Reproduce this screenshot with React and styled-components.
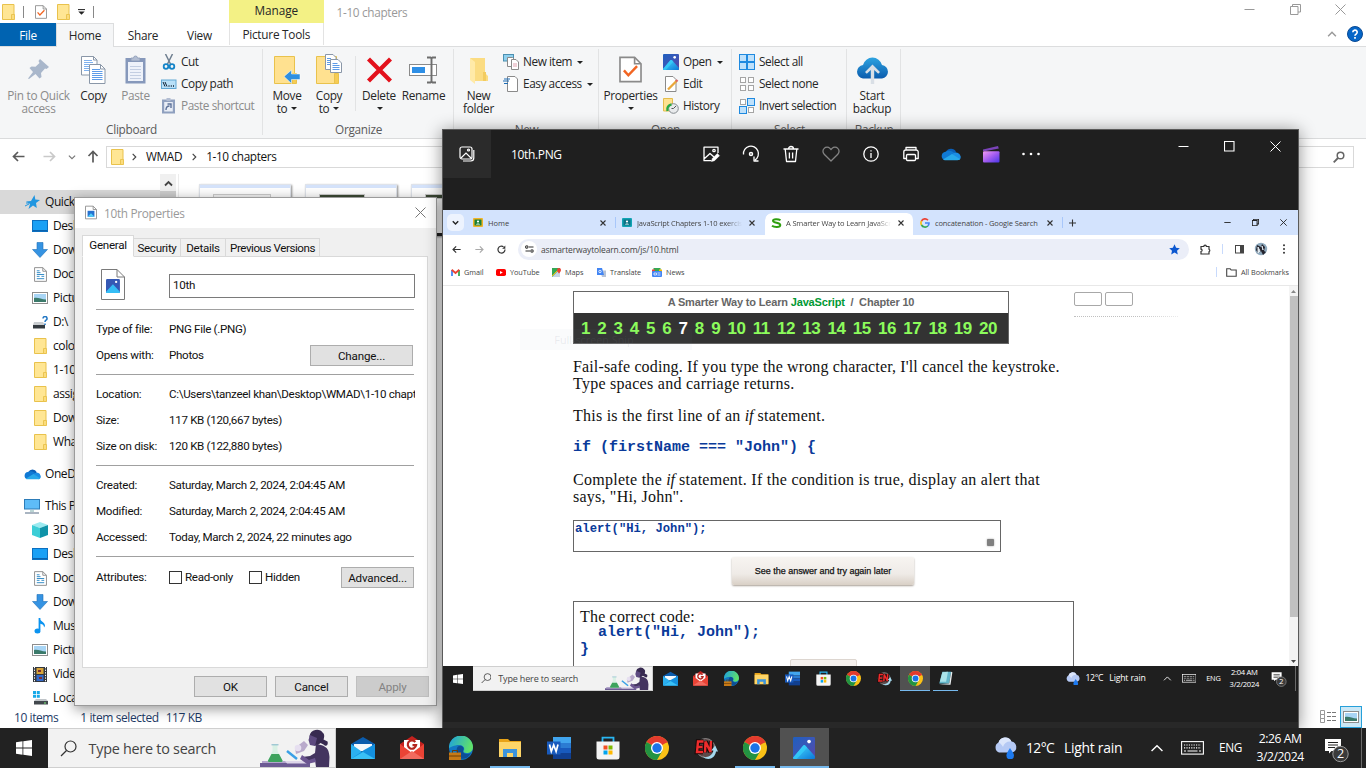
import React from "react";
import styled, { createGlobalStyle, css } from "styled-components";

const Global = createGlobalStyle`
  * { box-sizing: border-box; }
  body { margin: 0; overflow: hidden; background: #fff; }
  svg { display: block; flex: none; }
`;

const UI = `"Open Sans", "Noto Sans", sans-serif`;
const DLG = `Roboto, "Liberation Sans", sans-serif`;
const SERIF = `"Liberation Serif", Georgia, serif`;

const Desktop = styled.div`
  position: relative;
  width: 1366px;
  height: 768px;
  overflow: hidden;
  font-family: ${UI};
`;

/* ---------- shared icons ---------- */

const Folder = ({ w = 13, h = 16 }) => (
  <svg width={w} height={h} viewBox="0 0 13 16">
    <path d="M.5.5h11.500v15H.5z" fill="#ffe694" stroke="#e9c24c" />
    <path d="M9.500 10.500h3v5h-3z" fill="#fbdc7c" stroke="#e9c24c" strokeWidth=".9" />
  </svg>
);

const Page = ({ w = 14, h = 16, children }) => (
  <svg width={w} height={h} viewBox="0 0 14 16">
    <path d="M.6.600H9.500L13.400 4.500V15.400H.6z" fill="#fff" stroke="#8a8a8a" />
    <path d="M9.500.600V4.500H13.400" fill="none" stroke="#8a8a8a" />
    {children}
  </svg>
);

const CheckPage = ({ w, h }) => (
  <Page w={w} h={h}><path d="M3 8.500l2.700 3L11 6" fill="none" stroke="#f26522" strokeWidth="1.500" /></Page>
);

const PhotosLogo = ({ size = 24 }) => (
  <svg width={size} height={size} viewBox="0 0 24 24">
    <defs>
      <linearGradient id="phbg" x1="0" y1="0" x2="1" y2="1">
        <stop offset="0" stopColor="#1f5fbf" /><stop offset=".5" stopColor="#3a57b8" /><stop offset="1" stopColor="#5a45a5" />
      </linearGradient>
      <linearGradient id="phm" x1="0" y1="0" x2="1" y2="1">
        <stop offset="0" stopColor="#4be0ff" /><stop offset="1" stopColor="#0a78d8" />
      </linearGradient>
    </defs>
    <rect width="24" height="24" rx="1.500" fill="url(#phbg)" />
    <path d="M0 22.500L11 9.500a1.800 1.800 0 0 1 2.600 0L24 21v1.500a1.500 1.500 0 0 1-1.500 1.500h-21A1.500 1.500 0 0 1 0 22.500z" fill="url(#phm)" />
    <path d="M0 22.500L11 9.500a1.800 1.800 0 0 1 2.600 0L15.500 11.700 4 24H1.500A1.500 1.500 0 0 1 0 22.500z" fill="#35d0fb" opacity=".7" />
    <circle cx="17.500" cy="5" r="2" fill="#fff" />
  </svg>
);

const Cloud = ({ w = 17, h = 12 }) => (
  <svg width={w} height={h} viewBox="0 0 20 13">
    <path d="M5 4.500A5.500 5.500 0 0 1 15 4.500L12 10z" fill="#0a5fb8" />
    <path d="M4.500 4.200A4.300 4.300 0 0 0 3.500 12.500L14 6.500A7 7 0 0 0 4.500 4.200z" fill="#1079d4" />
    <path d="M12 6.200A4.500 4.500 0 0 1 19.500 8.500C20.300 10.500 19 12.300 17.500 12.600L10 8z" fill="#1b8de4" />
    <path d="M2 12L11 6.600 19 11.500C18.500 12.300 17.800 12.700 16.500 12.700H4.500C3.500 12.700 2.500 12.500 2 12z" fill="#28a8ea" />
  </svg>
);

const WindowGlyph = ({ kind, size = 11, color = "#999", sw = 1 }) => (
  <svg width={size} height={size} viewBox="0 0 11 11" fill="none" stroke={color} strokeWidth={sw}>
    {kind === "min" && <path d="M.5 5.500h10" />}
    {kind === "max" && <path d="M.5.500h9.500v9.500H.5z" strokeWidth={sw} />}
    {kind === "restore" && <path d="M.5 2.500h7.500v8H.5zM2.500 2.500v-2h8v7.500h-2.500" />}
    {kind === "close" && <path d="M.5.5l10 10M10.500.5l-10 10" />}
  </svg>
);

const Chevron = ({ dir = "down", size = 9, color = "#444", sw = 1.300 }) => {
  const d = { down: "M1 3l3.500 3.500L8 3", up: "M1 6.500L4.500 3 8 6.500", right: "M3 1l3.500 3.500L3 8" }[dir];
  return <svg width={size} height={size} viewBox="0 0 9 9"><path d={d} fill="none" stroke={color} strokeWidth={sw} /></svg>;
};

/* ---------- explorer window ---------- */

const Explorer = styled.section`
  position: absolute;
  inset: 0 0 40px 0;
  display: flex;
  flex-direction: column;
  background: #fff;
  color: #262626;
  font-size: 11.800px;
  letter-spacing: -0.42px;
`;

const ExplorerHead = styled.header`
  display: flex;
  height: 47px;
  border-bottom: 1px solid #dcddde;
`;
const HeadLeft = styled.div`width: 229px;`;
const QuickBar = styled.div`
  display: flex;
  align-items: center;
  height: 23px;
  padding-left: 2px;
`;
const QuickIcon = styled.div`margin-right: ${(p) => p.$mr}px;`;
const QuickSep = styled.i`
  width: 1px; height: 12px; background: #888; margin-right: ${(p) => p.$mr || 0}px;
`;
const TabStrip = styled.div`display: flex; letter-spacing: -0.25px;`;
const RibbonTab = styled.div`
  display: flex;
  align-items: center;
  justify-content: center;
  width: ${(p) => p.$w}px;
  height: ${(p) => (p.$on ? 24 : 23)}px;
  ${(p) => p.$file && css`background: #0063b1; color: #fff;`}
  ${(p) => p.$on && css`background: #f5f6f7; border: 1px solid #dcddde; border-bottom: 0; padding-bottom: 2px;`}
`;
const ContextTab = styled.div`
  width: 94.500px;
  text-align: center;
  line-height: 23px;
  letter-spacing: -0.25px;
`;
const ContextTop = styled.div`
  height: 23px; background: #f3f185; line-height: 20px; letter-spacing: -0.05px;
`;
const ContextBottom = styled.div`
  height: 22px; border: solid #e3e3e3; border-width: 0 1px;
`;
const WindowTitle = styled.div`
  padding: 3px 0 0 13px; width: 900px; line-height: 18px; color: #999; letter-spacing: -0.32px;
`;
const HeadRight = styled.div`margin-left: auto; width: 130px;`;
const WinButtons = styled.div`
  display: flex; justify-content: space-between; padding: 4px 20px 0 8px; height: 27px;
`;
const HelpRow = styled.div`
  display: flex; align-items: center; justify-content: flex-end; gap: 10px; padding-right: 3px; height: 14px;
`;

const Ribbon = styled.div`
  display: flex;
  height: 92px;
  background: #f5f6f7;
  border-bottom: 1px solid #dadbdc;
`;
const Group = styled.div`
  display: flex;
  flex-direction: column;
  width: ${(p) => p.$w}px;
  position: relative;
  background: linear-gradient(#e2e3e4, #e2e3e4) right 2px / 1px 86px no-repeat;
`;
const GroupBody = styled.div`
  display: flex; height: 74px; padding-left: ${(p) => p.$pl || 0}px;
`;
const GroupLabel = styled.div`
  text-align: center; line-height: 16px; color: #5a5a5a; letter-spacing: -0.3px;
`;
const BigButton = styled.div`
  width: ${(p) => p.$w}px;
  padding-top: 7px;
  display: flex;
  flex-direction: column;
  align-items: center;
  line-height: 13px;
  white-space: nowrap;
  letter-spacing: -0.3px;
  color: ${(p) => (p.$dim ? "#8b8b8b" : "#262626")};
`;
const BigIcon = styled.div`height: 35px; display: flex; align-items: flex-start;`;
const Line = styled.span`display: flex; align-items: center; gap: 3px; height: 13px;`;
const SmallColumn = styled.div`
  padding: 4px 0 0 ${(p) => p.$pl || 0}px; white-space: nowrap;
`;
const SmallButton = styled.div`
  display: flex; align-items: center; gap: 4px; height: 22px;
  color: ${(p) => (p.$dim ? "#8b8b8b" : "#262626")};
`;
const SmallText = styled.span`line-height: 16px; margin-bottom: 2px;`;
const InnerSep = styled.i`width: 1px; height: 55px; margin: 9px 0 0 8px; background: #e2e3e4;`;
const Caret = styled.i`
  border: solid transparent; border-width: 3px 3px 0; border-top-color: #222; margin-left: 1px;
`;

const PinIcon = () => (
  <svg width="22" height="28" viewBox="0 0 22 28">
    <g transform="translate(0 5)" fill="#a9b7cb">
      <path d="M12 0l9 8-2.500 2-1.500-.5-4 4.500.500 4-2 1.500-4-4.500L1 20l-1-.500 5-6.500L1.500 9l2-1.500 4 .3L11.500 4l-1-2z" />
    </g>
  </svg>
);
const CopyIcon = () => (
  <svg width="25" height="30" viewBox="0 -1 25 30">
    <g fill="#fff" stroke="#8a97a8"><path d="M.5 1.500h12l3.500 3.500v15H.5z" /><path d="M8.500 9.500h11l4.500 4.500v14.500H8.500z" /></g>
    <path d="M3 5.500h8M3 7.500h9M3 9.500h5M3 11.500h5M3 13.500h5M3 15.500h5" stroke="#7fb1ee" />
    <path d="M11 14.500h8M11 16.500h10.500M11 18.500h10.500M11 20.500h10.500M11 22.500h10.500M11 24.500h10.500" stroke="#5c9be8" />
    <path d="M12.500 1.500v3.500h3.500M19.500 9.500V14H24" fill="none" stroke="#8a97a8" />
  </svg>
);
const PasteIcon = () => (
  <svg width="21" height="30" viewBox="0 -1 21 30">
    <rect x=".5" y="3" width="20" height="25.500" fill="#8698bb" />
    <rect x="3" y="7" width="15" height="19" fill="#eef2fa" />
    <path d="M5 11.500h11M5 14.500h11M5 17.500h11M5 20.500h11M5 23.500h11" stroke="#c3cee2" />
    <path d="M6 6V3h2.500a2 2 0 0 1 4 0H15v3z" fill="#b2bdd2" stroke="#8c9ab5" strokeWidth=".8" />
  </svg>
);
const CutIcon = () => (
  <svg width="16" height="16" viewBox="0 0 16 16" fill="none">
    <path d="M4.500 0l5 10M11.500 0l-5 10" stroke="#6f7f90" strokeWidth="1.500" />
    <circle cx="5" cy="12.500" r="2.300" stroke="#1484c8" strokeWidth="1.800" /><circle cx="11" cy="12.500" r="2.300" stroke="#1484c8" strokeWidth="1.800" />
  </svg>
);
const CopyPathIcon = () => (
  <svg width="16" height="16" viewBox="0 0 16 16">
    <rect x=".5" y="4" width="14.500" height="8.500" fill="#b9e0f8" stroke="#63a8d4" />
    <path d="M2 6l2 4.500M4 6l2 4.500" stroke="#123" /><path d="M7.500 10h1M9.800 10h1M12 10h1" stroke="#123" strokeWidth="1.300" />
  </svg>
);
const PasteShortcutIcon = () => (
  <svg width="16" height="16" viewBox="0 0 16 16">
    <rect x="1" y="1.500" width="13" height="14" fill="#8fa0bf" /><rect x="3.200" y="4" width="8.600" height="9.500" fill="#e8edf6" />
    <path d="M5.500 0h4v3h-4z" fill="#b2bdd2" /><path d="M5 12c0-3 1-4 3.500-4M6.500 6h3.500v4" fill="none" stroke="#5c7199" strokeWidth="1.400" />
  </svg>
);
const BigFolder = ({ children, w = 28 }) => (
  <svg width={w} height="31" viewBox={`0 0 ${w} 31`}>
    <path d="M1.500 2.500h20v27h-20z" fill="#ffe190" stroke="#e9c24c" /><path d="M19.500 19.500h4v10h-4z" fill="#f6cc55" stroke="#e9c24c" />
    {children}
  </svg>
);
const MoveIcon = () => <BigFolder><path d="M11 22.500L18.500 16v4H27v5.500h-8.500v4z" fill="#2f8fe0" stroke="#fff" strokeWidth=".5" /></BigFolder>;
const CopyToIcon = () => (
  <BigFolder>
    <path d="M10.500.5h7.500l3 3v12h-10.500z" fill="#fff" stroke="#8a97a8" /><path d="M15.500 5.500h7.500l3.500 3.500v9.500h-11z" fill="#fff" stroke="#8a97a8" />
    <path d="M12 4.500h4M12 6.500h3M12 8.500h3M12 10.500h3M17.500 9.500h5M17.500 11.500h7M17.500 13.500h7M17.500 15.500h7" stroke="#5c9be8" />
  </BigFolder>
);
const DeleteIcon = () => (
  <svg width="26" height="30" viewBox="0 0 26 30"><path d="M2.500 5l22 22M24.500 5l-22 22" stroke="#e3111c" strokeWidth="4.300" /></svg>
);
const RenameIcon = () => (
  <svg width="29" height="30" viewBox="0 0 29 30" fill="none">
    <rect x=".5" y="10.500" width="27" height="11" fill="#fff" stroke="#8a8a8a" /><rect x="3" y="13" width="13" height="6" fill="#2e8fe6" />
    <path d="M22.500 4v24M18 3.500h3.500l1 1 1-1H27M18 28.500h3.500l1-1 1 1H27" stroke="#6d6d6d" strokeWidth="1.900" />
  </svg>
);
const NewFolderIcon = () => (
  <svg width="20" height="31" viewBox="0 0 20 31">
    <path d="M1 4h15v15l3 3v5H6z" fill="#fbdc82" /><path d="M1 4l5 4v22l-5-4z" fill="#ffeaa8" /><path d="M14 18h3v9h-3z" fill="#f3cc60" />
  </svg>
);
const NewItemIcon = () => (
  <svg width="16" height="16" viewBox="0 0 16 16">
    <rect x=".5" y=".500" width="10" height="6.500" fill="#8fd0ee" stroke="#4b8fb0" /><path d="M4.500 3.500h5l2 2v7h-7z" fill="#fff" stroke="#8a8a8a" />
    <path d="M8.500 5.500h4.500l2.500 2.500v7.500h-7z" fill="#fff" stroke="#8a8a8a" /><path d="M10 10h4M10 12h4" stroke="#d27a8c" strokeWidth=".7" />
  </svg>
);
const EasyIcon = () => (
  <svg width="16" height="16" viewBox="0 0 16 16">
    <path d="M4.500.5H12l2.500 2.500v12.500H4.500z" fill="#fff" stroke="#8a8a8a" /><path d="M1 3h6M0 5h6M1 7.500h4" stroke="#1f6db5" strokeWidth="1.200" />
  </svg>
);
const EditIcon = () => (
  <svg width="16" height="16" viewBox="0 0 16 16">
    <path d="M2.500.5H10l3 3v12H2.500z" fill="#fff" stroke="#8a8a8a" /><path d="M5 13.500L13.500 5" stroke="#e9a73b" strokeWidth="2.300" /><path d="M13 5.500l1.500-1.500" stroke="#d66" strokeWidth="2.300" />
  </svg>
);
const HistoryIcon = () => (
  <svg width="16" height="16" viewBox="0 0 16 16">
    <path d="M.5.500h9V13h-9z" fill="#ffe190" stroke="#e4bd4b" /><circle cx="10.500" cy="10.500" r="4.800" fill="#e8eaec" stroke="#858b90" />
    <path d="M10.500 10.500L13 8M10.500 10.500h-2" stroke="#555" /><path d="M8.500 6.500c-3 .500-5 3-4 6.500" fill="none" stroke="#27a844" strokeWidth="2.400" />
  </svg>
);
const SelIcon = ({ on }) => (
  <svg width="16" height="16" viewBox="0 0 16 16">
    {[[0, 0], [8, 0], [0, 8], [8, 8]].map(([x, y], i) => (
      on[i]
        ? <rect key={i} x={x + .5} y={y + .5} width="7" height="7" fill="#bfe1fb" stroke="#1f8ae0" />
        : <rect key={i} x={x + 1.500} y={y + 1.500} width="5" height="5" fill="#fff" stroke="#a5a5a5" />
    ))}
  </svg>
);
const BackupIcon = () => (
  <svg width="33" height="31" viewBox="0 0 33 31">
    <defs><linearGradient id="bk" x1="0" y1="0" x2="0" y2="1"><stop offset="0" stopColor="#2ea3e0" /><stop offset="1" stopColor="#0b5cae" /></linearGradient></defs>
    <path d="M7 24.500A6.800 6.800 0 0 1 7 11 9.800 9.800 0 0 1 26 11 6.800 6.800 0 0 1 26 24.500z" fill="url(#bk)" />
    <path d="M16.500 10.500l7.500 7.500-1.800 1.800-4-3.800V30h-3.400V16l-4 3.800L9 18z" fill="#d9dfe6" />
  </svg>
);

const Big = ({ w, icon, a, b, dim, caret }) => (
  <BigButton $w={w} $dim={dim}>
    <BigIcon>{icon}</BigIcon>
    <Line>{a}</Line>
    <Line>{b}{caret && <Caret />}</Line>
  </BigButton>
);
const Small = ({ icon, children, dim, caret }) => (
  <SmallButton $dim={dim}>{icon}<SmallText>{children}</SmallText>{caret && <Caret />}</SmallButton>
);

const AddressRow = styled.div`
  display: flex; align-items: center; height: 35px; padding-left: 12px;
`;
const NavArrow = styled.div`width: ${(p) => p.$w}px;`;
const AddressBox = styled.div`
  display: flex; align-items: center; gap: 8px; width: 970px; height: 22px; border: 1px solid #d9d9d9; padding-left: 4px; color: #111;
`;
const CrumbIcon = styled.span`margin-right: -2px;`;
const Crumb = styled.span`margin-bottom: 1px; letter-spacing: -0.35px;`;
const SearchBox = styled.div`
  display: flex; align-items: center; justify-content: flex-end; margin-left: 8px; width: 270px; height: 22px; border: 1px solid #d9d9d9; padding-right: 8px;
`;

const ExplorerBody = styled.div`display: flex; flex: 1; min-height: 0; overflow: hidden;`;
const NavPane = styled.nav`width: 160px; padding-top: 16px; color: #111; font-size: 12px;`;
const NavRow = styled.div`
  display: flex; align-items: center; height: 24px; gap: 5px;
  padding-left: ${(p) => (p.$top ? 24 : 32)}px; margin-bottom: ${(p) => p.$mb || 0}px;
  background: ${(p) => (p.$sel ? "#d9d9d9" : "none")};
  white-space: nowrap; overflow: hidden; line-height: 22px;
`;
const NavText = styled.span`margin-bottom: 1px;`;
const NavIcon = styled.span`width: 16px; display: flex; justify-content: center;`;
const NavScroll = styled.div`
  width: 16px; background: linear-gradient(#cdcdcd, #cdcdcd) 0 17px / 16px 400px no-repeat #f0f0f0;
  display: flex; justify-content: center; padding-top: 5px;
`;
const PaneLine = styled.i`width: 1px; margin-left: 2px; background: #ececec;`;
const Thumbs = styled.div`display: flex; gap: 14px; padding: 10px 0 0 20px;`;
const Thumb = styled.div`
  width: 92px; height: 52px; border: 1px solid #dfe3ea; border-bottom: 3px solid #222;
  background: linear-gradient(#d5e3fb, #d5e3fb) 0 0 / 100% 3px no-repeat, #fff;
  box-shadow: 1px 1px 2px rgba(0, 0, 0, .45); padding-top: 9px;
`;
const ThumbBar = styled.div`
  width: ${(p) => (p.$dark ? 46 : 58)}px; height: 5px; margin-left: 13px;
  background: ${(p) => (p.$dark ? "#3c4a35" : "#f4f4f4")}; border: 1px solid #ccc;
`;
const StatusBar = styled.footer`
  display: flex; align-items: center; height: 22px; padding: 0 4px 0 14px; color: #1d3a66; font-size: 12px;
`;
const StatusText = styled.span`margin-right: ${(p) => p.$mr}px;`;
const ViewButtons = styled.div`display: flex; align-items: center; gap: 3px; margin-left: auto;`;
const ViewOn = styled.div`
  display: flex; align-items: center; justify-content: center; width: 22px; height: 22px; border: 1px solid #26a0da; background: #cbe8f6;
`;

const StarIcon = () => (
  <svg width="15" height="14" viewBox="0 0 15 14"><path d="M9.500 0l.8 4.500L15 5l-4 3 .8 5L8 10.500 3.500 14 5 9 1 6.500l5-.5z" fill="#2196e0" /><path d="M0 11l4-2M1 8l3 0" stroke="#2196e0" /></svg>
);
const MonitorIcon = () => (
  <svg width="16" height="12" viewBox="0 0 16 12"><rect x=".5" y=".5" width="15" height="11" fill="#19a0f5" stroke="#0b6fc0" /><path d="M1 10.500h14" stroke="#0a62ad" /></svg>
);
const DownIcon = () => <svg width="16" height="16" viewBox="0 0 16 16"><path d="M5 .5h6v7h4.500L8 15.500.5 7.500H5z" fill="#3593e2" stroke="#1f70b8" strokeWidth=".6" /></svg>;
const DocIcon = () => <Page w={13} h={15}><path d="M3 6h4M3 8h8M3 10h3M8 10h3M3 12.500h8M3 4h3" stroke="#2a86c4" /></Page>;
const PicIcon = () => (
  <svg width="16" height="12" viewBox="0 0 16 12"><rect x=".5" y=".5" width="15" height="11" fill="#fff" stroke="#8d8d8d" /><rect x="2" y="2" width="12" height="8" fill="#a8d5f5" /><path d="M2 6c4-1 7 1.500 12 1.500V10H2z" fill="#3b7a6a" /></svg>
);
const DriveQ = () => (
  <svg width="15" height="13" viewBox="0 0 15 13"><path d="M1 6h9l2 3H0z" fill="#c9cdd0" /><path d="M0 9h12v3.500H0z" fill="#333a3f" /><path d="M10 2.500a2 2 0 1 1 3 1.700c-.8.5-1 .8-1 1.800M12 7.500v1.500" fill="none" stroke="#2377c4" strokeWidth="1.500" /></svg>
);
const PcIcon = () => (
  <svg width="16" height="15" viewBox="0 0 16 15"><rect x=".5" y=".5" width="15" height="9.500" fill="#5ebcf8" stroke="#2d7cb8" /><path d="M6 12h4" stroke="#7aa" /><path d="M1 14h14" stroke="#8696a8" strokeWidth="1.400" /></svg>
);
const CubeIcon = () => (
  <svg width="16" height="16" viewBox="0 0 16 16"><path d="M0 3l8-3 8 3-8 3z" fill="#9beaf0" /><path d="M0 3l8 3v10l-8-3z" fill="#3ccdd6" /><path d="M16 3L8 6v10l8-3z" fill="#0f93a8" /></svg>
);
const MusicIcon = () => (
  <svg width="12" height="16" viewBox="0 0 12 16"><path d="M5.500 0v12" stroke="#0b93f0" strokeWidth="1.800" /><ellipse cx="3.500" cy="13" rx="3" ry="2.500" fill="#0b93f0" /><path d="M5.500.5c1 3 5 3.500 5.500 7-.3 1-.5 1.500-1 2 .2-3-2.500-3.500-4.500-4z" fill="#0b93f0" /></svg>
);
const VideoIcon = () => (
  <svg width="14" height="15" viewBox="0 0 14 15"><rect width="14" height="15" fill="#33383e" /><path d="M1.500 0v15M12.500 0v15" stroke="#fff" strokeDasharray="1.300 1.300" /><path d="M3.500 1h7v6h-7z" fill="#d8a43a" /><path d="M3.500 8h7v6h-7z" fill="#3469c8" /><path d="M5 3h3v2H5zM6 10h3v2H6z" fill="#7b2f2f" /></svg>
);
const DiskIcon = () => (
  <svg width="15" height="14" viewBox="0 0 15 14"><path d="M0 0h3v3H0zM3.800 0h3v3h-3zM0 3.800h3v3H0zM3.800 3.800h3v3h-3z" fill="#17a9e8" /><path d="M3 8h10l2 2H1z" fill="#bfc4c8" /><path d="M1 10h14v3.500H1z" fill="#42484d" /><path d="M11 12h2" stroke="#7df07d" /></svg>
);

const NAV = [
  { t: "Quick access", i: <StarIcon />, top: 1, sel: 1 },
  { t: "Desktop", i: <MonitorIcon /> }, { t: "Downloads", i: <DownIcon /> }, { t: "Documents", i: <DocIcon /> },
  { t: "Pictures", i: <PicIcon /> }, { t: "D:\\", i: <DriveQ /> }, { t: "color", i: <Folder /> },
  { t: "1-10 chapters", i: <Folder /> }, { t: "assignment", i: <Folder /> },
  { t: "Downloads", i: <Folder /> }, { t: "WhatsApp", i: <Folder />, mb: 8 },
  { t: "OneDrive", i: <Cloud />, top: 1, mb: 8 }, { t: "This PC", i: <PcIcon />, top: 1 },
  { t: "3D Objects", i: <CubeIcon /> }, { t: "Desktop", i: <MonitorIcon /> }, { t: "Documents", i: <DocIcon /> },
  { t: "Downloads", i: <DownIcon /> }, { t: "Music", i: <MusicIcon /> }, { t: "Pictures", i: <PicIcon /> },
  { t: "Videos", i: <VideoIcon /> }, { t: "Local Disk", i: <DiskIcon /> },
];

const BackArrow = ({ flip, color = "#5a5a5a", size = 13, sw = 1.700 }) => (
  <svg width={size} height={size} viewBox="0 0 13 13"><g transform={flip ? "translate(13 0) scale(-1 1)" : undefined}><path d="M12.500 6.500H1.500M6 2L1.500 6.500 6 11" fill="none" stroke={color} strokeWidth={sw} /></g></svg>
);

const ExplorerWindow = () => (
  <Explorer>
    <ExplorerHead>
      <HeadLeft>
        <QuickBar>
          <QuickIcon $mr={8}><Folder /></QuickIcon><QuickSep $mr={11} />
          <QuickIcon $mr={10}><CheckPage w={12} h={16} /></QuickIcon>
          <QuickIcon $mr={8}><Folder /></QuickIcon>
          <QuickIcon $mr={8}><svg width="7" height="6" viewBox="0 0 7 6"><path d="M0 .6h7" stroke="#222" /><path d="M.3 2.500h6.400L3.500 5.800z" fill="#222" /></svg></QuickIcon>
          <QuickSep />
        </QuickBar>
        <TabStrip>
          <RibbonTab $w={56} $file>File</RibbonTab><RibbonTab $w={58} $on>Home</RibbonTab>
          <RibbonTab $w={58}>Share</RibbonTab><RibbonTab $w={55}>View</RibbonTab>
        </TabStrip>
      </HeadLeft>
      <ContextTab><ContextTop>Manage</ContextTop><ContextBottom>Picture Tools</ContextBottom></ContextTab>
      <WindowTitle>1-10 chapters</WindowTitle>
      <HeadRight>
        <WinButtons><WindowGlyph kind="min" /><WindowGlyph kind="restore" /><WindowGlyph kind="close" /></WinButtons>
        <HelpRow>
          <Chevron dir="up" color="#999" size={10} />
          <svg width="16" height="16" viewBox="0 0 16 16"><circle cx="8" cy="8" r="7.500" fill="#0566c8" stroke="#0a4a94" /><path d="M5.800 6.200a2.200 2.200 0 1 1 3.200 2c-.8.4-1 .8-1 1.500M8 11v1.700" fill="none" stroke="#fff" strokeWidth="1.700" /></svg>
        </HelpRow>
      </HeadRight>
    </ExplorerHead>
    <Ribbon>
      <Group $w={263}>
        <GroupBody>
          <Big w={77} icon={<PinIcon />} a="Pin to Quick" b="access" dim />
          <Big w={33} icon={<CopyIcon />} a="Copy" /><Big w={51} icon={<PasteIcon />} a="Paste" dim />
          <SmallColumn>
            <Small icon={<CutIcon />}>Cut</Small><Small icon={<CopyPathIcon />}>Copy path</Small><Small icon={<PasteShortcutIcon />} dim>Paste shortcut</Small>
          </SmallColumn>
        </GroupBody>
        <GroupLabel>Clipboard</GroupLabel>
      </Group>
      <Group $w={191}>
        <GroupBody>
          <Big w={48} icon={<MoveIcon />} a="Move" b="to" caret /><Big w={36} icon={<CopyToIcon />} a="Copy" b="to" caret />
          <InnerSep />
          <Big w={46} icon={<DeleteIcon />} a="Delete" caret /><Big w={43} icon={<RenameIcon />} a="Rename" />
        </GroupBody>
        <GroupLabel>Organize</GroupLabel>
      </Group>
      <Group $w={145}>
        <GroupBody>
          <Big w={49} icon={<NewFolderIcon />} a="New" b="folder" />
          <SmallColumn><Small icon={<NewItemIcon />} caret>New item</Small><Small icon={<EasyIcon />} caret>Easy access</Small></SmallColumn>
        </GroupBody>
        <GroupLabel>New</GroupLabel>
      </Group>
      <Group $w={133}>
        <GroupBody>
          <Big w={63} icon={<CheckPage w={23} h={31} />} a="Properties" caret />
          <SmallColumn $pl={1}><Small icon={<PhotosLogo size={16} />} caret>Open</Small><Small icon={<EditIcon />}>Edit</Small><Small icon={<HistoryIcon />}>History</Small></SmallColumn>
        </GroupBody>
        <GroupLabel>Open</GroupLabel>
      </Group>
      <Group $w={115}>
        <GroupBody $pl={7}>
          <SmallColumn><Small icon={<SelIcon on={[1, 1, 1, 1]} />}>Select all</Small><Small icon={<SelIcon on={[0, 0, 0, 0]} />}>Select none</Small><Small icon={<SelIcon on={[0, 1, 1, 0]} />}>Invert selection</Small></SmallColumn>
        </GroupBody>
        <GroupLabel>Select</GroupLabel>
      </Group>
      <Group $w={54}>
        <GroupBody><Big w={50} icon={<BackupIcon />} a="Start" b="backup" /></GroupBody>
        <GroupLabel>Backup</GroupLabel>
      </Group>
    </Ribbon>
    <AddressRow>
      <NavArrow $w={31}><BackArrow /></NavArrow><NavArrow $w={25}><BackArrow flip color="#c9c9c9" /></NavArrow>
      <NavArrow $w={19}><Chevron size={8} color="#777" /></NavArrow>
      <NavArrow $w={19}><svg width="12" height="13" viewBox="0 0 12 13"><path d="M6 12.500V1.500M1.500 6L6 1.500 10.500 6" fill="none" stroke="#5a5a5a" strokeWidth="1.700" /></svg></NavArrow>
      <AddressBox><CrumbIcon><Folder /></CrumbIcon><Chevron dir="right" size={8} /><Crumb>WMAD</Crumb><Chevron dir="right" size={8} /><Crumb>1-10 chapters</Crumb></AddressBox>
      <SearchBox><svg width="12" height="12" viewBox="0 0 12 12"><circle cx="7.500" cy="4.500" r="3.300" fill="none" stroke="#666" strokeWidth="1.500" /><path d="M5 7L.7 11.300" stroke="#666" strokeWidth="1.800" /></svg></SearchBox>
    </AddressRow>
    <ExplorerBody>
      <NavPane>
        {NAV.map((n, k) => <NavRow key={k} $top={n.top} $sel={n.sel} $mb={n.mb}><NavIcon>{n.i}</NavIcon><NavText>{n.t}</NavText></NavRow>)}
      </NavPane>
      <NavScroll><Chevron dir="up" sw={1.800} size={9} /></NavScroll>
      <PaneLine />
      <Thumbs><Thumb><ThumbBar /></Thumb><Thumb><ThumbBar $dark /></Thumb><Thumb><ThumbBar $dark /></Thumb></Thumbs>
    </ExplorerBody>
    <StatusBar>
      <StatusText $mr={22}>10 items</StatusText><StatusText $mr={7}>1 item selected</StatusText><StatusText $mr={0}>117 KB</StatusText>
      <ViewButtons>
        <svg width="17" height="14" viewBox="0 0 17 14"><path d="M.5.500h4v4h-4zM.5 4.500h4v4h-4zM.5 8.500h4v4h-4z" fill="none" stroke="#999" /><path d="M7 2.500h4M12 2.500h4M7 6.500h4M12 6.500h4M7 10.500h4M12 10.500h4" stroke="#777" /></svg>
        <ViewOn><PicIcon /></ViewOn>
      </ViewButtons>
    </StatusBar>
  </Explorer>
);

/* ---------- properties dialog ---------- */

const Dialog = styled.section`
  position: absolute;
  left: 74px;
  top: 197px;
  width: 363px;
  height: 509px;
  border: 1px solid #9b9b9b;
  background: #f0f0f0;
  box-shadow: 0 3px 12px rgba(0, 0, 0, .42);
  font-family: ${DLG};
  font-size: 11.600px;
  letter-spacing: -0.3px;
  color: #111;
`;
const DialogTitle = styled.div`
  display: flex; align-items: center; height: 30px; padding: 0 10px 1px; background: #fff; color: #999;
  font-family: ${UI}; font-size: 11.800px; gap: 7px;
`;
const Spacer = styled.i`flex: 1;`;
const DialogTabs = styled.div`display: flex; align-items: flex-end; height: 29px; padding: 0 7px; margin-bottom: -1px;`;
const DialogTab = styled.div`
  width: ${(p) => p.$w}px; height: ${(p) => (p.$on ? 22 : 19)}px; line-height: ${(p) => (p.$on ? 18 : 18)}px;
  text-align: center; white-space: nowrap; border: 1px solid #d9d9d9; border-left-width: ${(p) => (p.$on ? 1 : 0)}px;
  ${(p) => p.$on && css`background: #fff; border-bottom-color: #fff; position: relative;`}
`;
const TightTab = styled(DialogTab)`letter-spacing: -0.45px;`;
const DialogPane = styled.div`
  margin: 0 8px 0 7px; height: 412px; padding: 12px 12px 0 13px; border: 1px solid #d9d9d9; background: #fff;
`;
const IconRow = styled.div`display: flex; height: 40px; padding-left: 5px;`;
const NameInput = styled.div`
  width: 246px; height: 24px; margin: 5px 0 0 44px; border: 1px solid #7a7a7a; padding-left: 3px; line-height: 20px;
`;
const Rule = styled.div`height: 1px; width: 318px; background: #a0a0a0;`;
const Field = styled.div`
  display: flex; align-items: center; height: 26px; width: ${(p) => p.$w || 319}px;
`;
const FieldBlock = styled.div`padding: ${(p) => p.$p};`;
const FieldName = styled.span`width: 73px; letter-spacing: -0.26px;`;
const FieldValue = styled.span`width: 246px; overflow: hidden; white-space: nowrap; letter-spacing: -0.32px;`;
const Button = styled.div`
  width: ${(p) => p.$w || 73}px; height: 21px; line-height: 20px; text-align: center; letter-spacing: -0.15px;
  border: 1px solid ${(p) => (p.$off ? "#bfbfbf" : "#adadad")}; background: ${(p) => (p.$off ? "#ccc" : "#e1e1e1")};
  color: ${(p) => (p.$off ? "#838383" : "#111")};
`;
const Check = styled.i`width: 13px; height: 13px; border: 1px solid #333; background: #fff; margin-right: 3px;`;
const CheckLabel = styled.span`width: ${(p) => p.$w}px;`;
const DialogButtons = styled.div`display: flex; justify-content: flex-end; gap: 8px; padding: 8px 7px 0;`;

const PropertiesDialog = () => (
  <Dialog>
    <DialogTitle>
      <Page w={12} h={15}><path d="M3 6h8v7H3z" fill="#2672d0" /><path d="M3 13l4-4 4 4z" fill="#4fd0f8" /></Page>
      <span>10th Properties</span><Spacer />
      <WindowGlyph kind="close" color="#777" />
    </DialogTitle>
    <DialogTabs>
      <DialogTab $w={52} $on>General</DialogTab><DialogTab $w={47}>Security</DialogTab>
      <DialogTab $w={45}>Details</DialogTab><TightTab $w={94}>Previous Versions</TightTab>
    </DialogTabs>
    <DialogPane>
      <IconRow>
        <svg width="24" height="31" viewBox="0 0 24 31"><path d="M.5.5H16L23.500 8V30.500H.5z" fill="#fff" stroke="#7a7a7a" /><path d="M16 .5V8h7.500" fill="none" stroke="#7a7a7a" /><g transform="translate(5 10) scale(.58)"><rect width="24" height="24" rx="2" fill="#3558b4" /><path d="M0 22L12 9 24 22v2H0z" fill="#35bdf5" /><circle cx="17.500" cy="5" r="2" fill="#fff" /></g></svg>
        <NameInput>10th</NameInput>
      </IconRow>
      <Rule />
      <FieldBlock $p="6px 0 6px">
        <Field><FieldName>Type of file:</FieldName><FieldValue>PNG File (.PNG)</FieldValue></Field>
        <Field $w={317}><FieldName>Opens with:</FieldName><span>Photos</span><Spacer /><Button $w={103}>Change...</Button></Field>
      </FieldBlock>
      <Rule />
      <FieldBlock $p="6px 0 6px">
        <Field><FieldName>Location:</FieldName><FieldValue>C:\Users\tanzeel khan\Desktop\WMAD\1-10 chapters</FieldValue></Field>
        <Field><FieldName>Size:</FieldName><FieldValue>117 KB (120,667 bytes)</FieldValue></Field>
        <Field><FieldName>Size on disk:</FieldName><FieldValue>120 KB (122,880 bytes)</FieldValue></Field>
      </FieldBlock>
      <Rule />
      <FieldBlock $p="6px 0 6px">
        <Field><FieldName>Created:</FieldName><FieldValue>Saturday, March 2, 2024, 2:04:45 AM</FieldValue></Field>
        <Field><FieldName>Modified:</FieldName><FieldValue>Saturday, March 2, 2024, 2:04:45 AM</FieldValue></Field>
        <Field><FieldName>Accessed:</FieldName><FieldValue>Today, March 2, 2024, 22 minutes ago</FieldValue></Field>
      </FieldBlock>
      <Rule />
      <FieldBlock $p="7px 0">
        <Field><FieldName>Attributes:</FieldName><Check /><CheckLabel $w={64}>Read-only</CheckLabel><Check /><CheckLabel $w={76}>Hidden</CheckLabel><Button>Advanced...</Button></Field>
      </FieldBlock>
    </DialogPane>
    <DialogButtons><Button>OK</Button><Button>Cancel</Button><Button $off>Apply</Button></DialogButtons>
  </Dialog>
);

/* ---------- taskbar (sized in em) ---------- */

const Bar = styled.div`
  display: flex;
  align-items: stretch;
  height: 2.500em;
  font-size: ${(p) => p.$fs}px;
  background: #1f1f1f;
  color: #fff;
  flex: none;
`;
const BottomBar = styled(Bar)`position: absolute; left: 0; right: 0; bottom: 0; background: #222;`;
const StartCell = styled.div`width: 3em; display: flex; align-items: center; justify-content: center;`;
const SearchCell = styled.div`
  width: 18em; margin-right: .18em; background: #f2f2f2; border: 1px solid #cfcfcf; border-left: 0; color: #444;
  display: flex; align-items: center; justify-content: space-between; padding-left: .75em; overflow: hidden;
`;
const SearchText = styled.span`font-size: .9em; margin-left: .8em; flex: 1; white-space: nowrap; letter-spacing: -0.018em;`;
const AppCell = styled.div`
  width: 3.063em; display: flex; align-items: center; justify-content: center;
  ${(p) => p.$on && css`background: linear-gradient(#76b9ed, #76b9ed) bottom / 100% .15em no-repeat #515151;`}
  ${(p) => p.$line && css`background: linear-gradient(#76b9ed, #76b9ed) bottom / 2.500em .15em no-repeat;`}
`;
const TrayCell = styled.div`
  width: ${(p) => p.$w}em; display: flex; align-items: center; justify-content: center; white-space: nowrap;
`;
const NoticeCell = styled(TrayCell)`padding-top: .2em;`;
const Weather = styled(TrayCell)`justify-content: flex-start; margin-left: auto;`;
const TrayText = styled.span`
  font-size: ${(p) => p.$s}em; margin-left: ${(p) => p.$ml || 0}em; letter-spacing: ${(p) => p.$ls || 0}em; line-height: 1.500; text-align: center;
`;
const EndLine = styled.i`width: .31em; border-left: 1px solid #6a6a6a;`;

const Icon = ({ s, w = 24, h = 24, children }) => <svg width={w * s} height={h * s} viewBox={`0 0 ${w} ${h}`}>{children}</svg>;
const WinLogo = ({ s }) => <Icon s={s} w={16} h={16}><path d="M0 2.200l6.500-.9v6.300H0zM7.300 1.200L16 0v7.600H7.300zM0 8.400h6.500v6.300L0 13.800zM7.300 8.400H16V16l-8.700-1.200z" fill="#fff" /></Icon>;
const MailIcon = ({ s }) => <Icon s={s}><path d="M0 8L12 1l12 7v3H0z" fill="#0b5cad" /><path d="M3 8h18v7H3z" fill="#f4f8fc" /><path d="M0 8l12 8.500L24 8v15H0z" fill="#2bb0f0" /><path d="M0 23l13-9 11-6v15z" fill="#1490df" /><path d="M0 23l12-7 12 7z" fill="#39c1f7" /></Icon>;
const GmailIcon = ({ s }) => <Icon s={s}><path d="M0 8L12 0l12 8v15H0z" fill="#c5221f" /><path d="M4 4h16v12H4z" fill="#fff" /><path d="M15.300 6a4.200 4.200 0 1 0 .8 3.200H12.500" fill="none" stroke="#b3261e" strokeWidth="2.200" /><path d="M0 8l12 9 12-9v15H0z" fill="#ea4335" /><path d="M0 23l12-8 12 8z" fill="#f26a5e" /></Icon>;
const EdgeIcon = ({ s }) => <Icon s={s}><defs><linearGradient id="edg" x1="0" x2="1" y2=".3"><stop offset="0" stopColor="#1b9ee2" /><stop offset="1" stopColor="#5fe06b" /></linearGradient></defs><circle cx="12" cy="12" r="12" fill="#1277c4" /><path d="M0 12A12 12 0 0 1 24 11c0 4-3 6-6.500 6-3 0-3.500-1.500-2.500-3 1-2-1-5-5-5C5 9 1.500 11.500 0 12z" fill="url(#edg)" /><path d="M8 12c1-2.500 4-3 6-1 1.500 2 0 3 0 4.500 0 2 4 3.500 8 1.500-3 6-9 7-12 4.500-3-2-3-6-2-9.500z" fill="#0d4f96" /><path d="M0 16.500h12V24H0z" fill="#c77a16" /><path d="M3.500 16.500V14.500h5v2M0 20h12" stroke="#6b3c06" fill="none" /></Icon>;
const FilesIcon = ({ s }) => <Icon s={s}><path d="M1 3h9l2 2h11v16H1z" fill="#e8a317" /><path d="M1 6h22v15H1z" fill="#fdd568" /><path d="M5 21v-8h14v8h-4v-4H9v4z" fill="#3d94dc" /></Icon>;
const WordIcon = ({ s }) => <Icon s={s}><path d="M6 1h18v6H6z" fill="#41a5ee" /><path d="M6 7h18v5H6z" fill="#2b7cd3" /><path d="M6 12h18v5H6z" fill="#185abd" /><path d="M6 17h18v6H6z" fill="#103f91" /><path d="M0 5.500h13.500v13H0z" fill="#185abd" /><path d="M2.500 8.500l1.800 7 2.400-6.500 2.400 6.500 1.900-7" fill="none" stroke="#fff" strokeWidth="1.700" /></Icon>;
const StoreIcon = ({ s }) => <Icon s={s}><path d="M6.500 7V1.700h11V7" fill="none" stroke="#29b6f2" strokeWidth="1.800" /><path d="M.5 5.500h23V21a2.500 2.500 0 0 1-2.500 2.500H3A2.500 2.500 0 0 1 .5 21z" fill="#f4f4f4" /><path d="M7.500 9.500h4v4h-4z" fill="#f25022" /><path d="M12.500 9.500h4v4h-4z" fill="#7fba00" /><path d="M7.500 14.500h4v4h-4z" fill="#00a4ef" /><path d="M12.500 14.500h4v4h-4z" fill="#ffb900" /></Icon>;
const ChromeIcon = ({ s }) => <Icon s={s}><circle cx="12" cy="12" r="12" fill="#fbc116" /><path d="M12 12L1.600 6A12 12 0 0 1 22.400 6z" fill="#e33b2e" /><path d="M1.600 6A12 12 0 0 0 12 24l5.200-9L12 12z" fill="#229342" /><path d="M12 6h10.400" stroke="#e33b2e" strokeWidth="1" /><circle cx="12" cy="12" r="6" fill="#fff" /><circle cx="12" cy="12" r="4.700" fill="#1a73e8" /></Icon>;
const EndNoteIcon = ({ s }) => <Icon s={s}><circle cx="11.500" cy="12" r="9.500" fill="#5c4a4a" stroke="#b9b9b9" strokeWidth=".6" /><path d="M9.500 5.500H4L3 16h6M3.500 11h5M11 16.500l.5-11 5 10.500.5-11" fill="none" stroke="#180a0a" strokeWidth="4.500" /><path d="M9.500 5.500H4L3 16h6M3.500 11h5M11 16.500l.5-11 5 10.500.5-11" fill="none" stroke="#ee2c2c" strokeWidth="2.400" /><path d="M8.500 20.500c5 2 10-1 11-6h-2.300l4-5 2.800 6h-2c-1 7-8 10-13.500 5z" fill="#a5d9ee" /></Icon>;
const NoteIcon = ({ s }) => <Icon s={s}><path d="M7 1h14l-3 19H2z" fill="#62b5c9" /><path d="M7 2l9-1-3 16H3z" fill="#a9e2e8" /><path d="M21 1l2 1-3 20-18-1 16-1z" fill="#e9eef0" /></Icon>;
const WeatherIcon = ({ s }) => <Icon s={s} w={25} h={22}><path d="M6 15.500A5.500 5.500 0 0 1 5.500 5.500 7 7 0 0 1 18.500 4.500 5.700 5.700 0 0 1 19.500 15.500z" fill="#b5c9f4" /><path d="M5.500 5.500A7 7 0 0 1 18.500 4.500C14 4 11 6 10 10 8 6.500 7 6 5.500 5.500z" fill="#dce6fb" /><path d="M17 11c2.500 4 4 5.500 4 7.500a3.800 3.800 0 0 1-7.600 0c0-2 1.600-4 3.600-7.500z" fill="#1d7af0" /></Icon>;
const KeyboardIcon = ({ s }) => <Icon s={s} w={23} h={14}><rect x=".6" y=".6" width="21.800" height="12.500" fill="none" stroke="#fff" strokeWidth="1.100" /><path d="M3 4h17M3 6.800h17" stroke="#fff" strokeWidth="1.200" strokeDasharray="1.200 1.200" /><path d="M3 10h2M6.500 10h10M18 10h2" stroke="#fff" strokeWidth="1.200" /></Icon>;
const NoticeIcon = ({ s }) => <Icon s={s} w={26} h={26}><path d="M1 2h16v12H7.500L5 16.500V14H1z" fill="#fff" /><path d="M4 5.500h10M4 8h10M4 10.500h7" stroke="#222" /><circle cx="16.500" cy="17" r="7.700" fill="#3a3a3a" stroke="#999" /><text x="16.500" y="21.400" textAnchor="middle" fontSize="12.500" fontFamily="Open Sans" fill="#fff">2</text></Icon>;
const SearchArt = ({ s }) => (
  <Icon s={s} w={75} h={38}>
    <path d="M0 34h50v4H0z" fill="#6d5b94" /><path d="M2 32h46v2H2z" fill="#b3a5cc" />
    <path d="M12.500 16h5v6l5 9.500a1 1 0 0 1-1 1.500H9a1 1 0 0 1-1-1.500l4.500-9.500z" fill="#d8f0e4" /><path d="M11.500 25h7.500l3.500 6.500a1 1 0 0 1-1 1.500H9a1 1 0 0 1-1-1.500z" fill="#3da35d" /><path d="M11.500 15.800h7" stroke="#7fb7c8" />
    <path d="M27 22l10 8" stroke="#3aa0e6" strokeWidth="2.500" /><path d="M25 32h24l-2 2.500H27z" fill="#ded6ea" />
    <path d="M35 19l9-7 4 4-4 6-8 3z" fill="#b9aacb" /><circle cx="38" cy="19" r="3.300" fill="#e6dff0" />
    <path d="M49.500 7a7.500 7.500 0 0 1 13.500-3c2 1.500 1 5 .5 6.500l4 2c1 3-1 6-4 3l-3-1.500-4 3-3-1-3-2z" fill="#372a50" /><path d="M50 6l-1.500 5 1.500 5 5 1 2-8z" fill="#5d4a80" />
    <path d="M56 15l5 1c7 2 8 6 8.500 12L69 38H56l-1-7-10 1-3-4 8-1 5-3z" fill="#43345f" /><path d="M42 26l7 5 6-2 1 4-9 2-7-5z" fill="#6b5590" />
  </Icon>
);

const APPS = { mail: MailIcon, gmail: GmailIcon, edge: EdgeIcon, files: FilesIcon, word: WordIcon, store: StoreIcon, chrome: ChromeIcon, en: EndNoteIcon, note: NoteIcon };

const TaskbarContent = ({ s, apps, time }) => (
  <>
    <StartCell><WinLogo s={s} /></StartCell>
    <SearchCell>
      <Icon s={s} w={17} h={17}><circle cx="10.500" cy="6.500" r="5.500" fill="none" stroke="#333" strokeWidth="1.200" /><path d="M6.500 10.500L1 16" stroke="#333" strokeWidth="1.300" /></Icon>
      <SearchText>Type here to search</SearchText>
      <SearchArt s={s} />
    </SearchCell>
    {apps.map(([name, state], i) => {
      const A = APPS[name];
      return <AppCell key={i} $on={state === "on"} $line={state === "line"}>{A ? <A s={s} /> : <PhotosLogo size={22 * s} />}</AppCell>;
    })}
    <Weather $w={9.400}><WeatherIcon s={s} /><TrayText $s={.87} $ml={.6} $ls={-.04}>12°C</TrayText><TrayText $s={.87} $ml={.7} $ls={-.02}>Light rain</TrayText></Weather>
    <TrayCell $w={1.750}><Chevron dir="up" size={14 * s} color="#fff" sw={.9} /></TrayCell>
    <TrayCell $w={2.630}><KeyboardIcon s={s} /></TrayCell>
    <TrayCell $w={2.190}><TrayText $s={.74} $ls={-.03}>ENG</TrayText></TrayCell>
    <TrayCell $w={4}><TrayText $s={.76} $ls={-.035}>{time}<br />3/2/2024</TrayText></TrayCell>
    <NoticeCell $w={3.060}><NoticeIcon s={s} /></NoticeCell>
    <EndLine />
  </>
);

/* ---------- photos window ---------- */

const Photos = styled.section`
  position: absolute;
  left: 442px;
  top: 129px;
  width: 857px;
  height: 599px;
  display: flex;
  flex-direction: column;
  border: 1px solid #5a5a5a;
  border-bottom: 0;
  background: #1f1f1f;
  color: #fff;
  box-shadow: 0 2px 16px rgba(0, 0, 0, .45);
`;
const PhotosBar = styled.div`display: flex; height: 80px; align-items: flex-start;`;
const PhotosHome = styled.div`
  width: 48px; height: 48px; background: #2b2b2b; display: flex; align-items: center; justify-content: center;
`;
const PhotosName = styled.div`width: 200px; padding-left: 20px; line-height: 49px; font-size: 12px; letter-spacing: -0.35px;`;
const Tool = styled.div`width: 40px; height: 48px; display: flex; align-items: center; justify-content: center;`;
const WinCell = styled.div`width: 46px; height: 32px; display: flex; align-items: center; justify-content: center;`;
const PhotosFoot = styled.div`flex: 1; border-bottom: 6px solid #282828;`;

const Stroke = ({ children, c = "#fff", o = 1 }) => (
  <svg width="20" height="20" viewBox="0 0 20 20" fill="none" stroke={c} strokeWidth="1.300" opacity={o} strokeLinejoin="round">{children}</svg>
);

/* ---------- browser shown in the photo ---------- */

const Browser = styled.div`
  display: flex; flex-direction: column; height: 456px; background: #fff; color: #444; font-size: 7.500px; letter-spacing: 0;
`;
const TabBar = styled.div`display: flex; align-items: center; height: 25px; background: #d3e3fd; padding-left: 4px;`;
const TabSearch = styled.div`
  width: 17px; height: 17px; border-radius: 5px; background: #edf3fe; margin-right: 3px; display: flex; align-items: center; justify-content: center;
`;
const Tab = styled.div`
  display: flex; align-items: center; width: 149px; height: 22px; margin-top: 3px; padding: 0 0 3px 6px; border-radius: 7px 7px 0 0;
  background: ${(p) => (p.$on ? "#fff" : "none")};
  border-right: 1px solid ${(p) => (p.$sep ? "#a8c7fa" : "transparent")};
  background-clip: padding-box;
  ${(p) => p.$sep && css`border-radius: 0; height: 11px; margin-top: 0; padding-bottom: 0;`}
`;
const Fav = styled.span`width: 15px; display: flex;`;
const TabTitle = styled.span`
  width: 105px; margin-right: 7px; overflow: hidden; white-space: nowrap; letter-spacing: ${(p) => p.$ls || 0}px;
  ${(p) => p.$fade && css`mask-image: linear-gradient(90deg, #000 85%, transparent);`}
`;
const BrowserWin = styled.div`display: flex; margin-left: auto; gap: 21px; padding-right: 11px;`;
const NavBar = styled.div`display: flex; align-items: center; height: 28px; padding-left: 9px;`;
const NavItem = styled.div`width: ${(p) => p.$w}px; display: flex;`;
const Omni = styled.div`
  display: flex; align-items: center; width: 671px; height: 21px; border-radius: 11px; background: #ebeef8; padding: 0 9px 0 3px; color: #444; font-size: 8.500px; letter-spacing: -0.14px; margin-right: 11px;
`;
const SiteInfo = styled.div`width: 16px; height: 16px; border-radius: 50%; background: #fff; margin-right: 4px; display: flex; align-items: center; justify-content: center;`;
const Bookmarks = styled.div`display: flex; align-items: center; height: 23px; padding: 0 9px 4px 8px; border-bottom: 1px solid #e8e8e8; font-size: 7.300px;`;
const Mark = styled.div`display: flex; align-items: center; gap: 4px; width: ${(p) => p.$w}px; letter-spacing: -0.05px;`;
const MarkSep = styled.i`width: 1px; height: 10px; background: #c8dafc; margin: 0 ${(p) => p.$m}px;`;
const PageArea = styled.div`display: flex; flex: 1; min-height: 0; overflow: hidden; position: relative;`;
const Article = styled.main`
  width: 501px; margin-left: 130px; padding-top: 5px; color: #111; font-family: ${SERIF}; font-size: 16px; letter-spacing: .24px; line-height: 17px;
  em { letter-spacing: -0.2px; }
`;
const Masthead = styled.div`width: 436px; height: 53px; border: 1px solid #666; background: #333; font-family: "Liberation Sans", sans-serif; margin-bottom: 14px;`;
const MastTitle = styled.div`
  height: 21px; background: #fff; text-align: center; line-height: 20px; font-size: 11px; font-weight: 700; color: #666; letter-spacing: -0.17px; white-space: pre;
  b { color: #009933; }
`;
const Numbers = styled.div`display: flex; gap: 7.260px; padding-left: 7px; font-size: 17px; font-weight: 700; letter-spacing: -0.45px; line-height: 31px; color: #8cfc5c;`;
const Num = styled.span`color: ${(p) => (p.$here ? "#fff" : "inherit")};`;
const Para = styled.p`margin: 0 0 15px; width: 500px; white-space: nowrap;`;
const Row = styled.span`display: block; letter-spacing: ${(p) => p.$ls}px;`;
const Code = styled.code`
  font: 700 ${(p) => p.$s || 15}px/17px "Liberation Mono", monospace; letter-spacing: 0; color: #0a3a9a; white-space: pre; display: block;
`;
const Answer = styled.div`
  display: flex; align-items: flex-end; justify-content: space-between; width: 428px; height: 32px; border: 1px solid #666; padding: 0 0 0 1px; margin: 14px 0 5px;
`;
const AnswerCode = styled(Code)`align-self: flex-start; line-height: 16px;`;
const StatusDot = styled.i`width: 7px; height: 7px; border-radius: 1px; background: #808080; margin: 0 6px 5px 0; box-shadow: 0 0 2px #999;`;
const TryButton = styled.div`
  width: 182px; height: 28px; margin: 0 0 16px 159px; text-align: center; font: 9px/28px "Liberation Sans", sans-serif; letter-spacing: -0.02px; -webkit-text-stroke: .25px #111;
  border-radius: 2px; background: linear-gradient(#f7f4f1, #efebe7 60%, #d9d0c6); box-shadow: 0 1px 2px #a89f96;
`;
const Correct = styled.div`width: 501px; height: 90px; border: 1px solid #666; padding: 6px 6px 0; position: relative;`;
const CorrectLabel = styled.div`letter-spacing: .18px; height: 16px;`;
const NextButton = styled.div`width: 67px; height: 20px; margin: 1px 0 0 210px; border: 1px solid #ddd6d0; border-radius: 2px; background: #f4f0ed;`;
const SideBoxes = styled.aside`display: flex; flex-wrap: wrap; align-content: flex-start; gap: 4px 3px; width: 105px; padding: 6px 0 0 0;`;
const SideBox = styled.i`width: 28px; height: 14px; border: 1px solid #a8a8a8; border-radius: 2px;`;
const Dotted = styled.i`width: 104px; height: 0; margin-top: 6px; border-top: 1.500px dotted #c0c0c0; mask-image: linear-gradient(90deg, #000 60%, rgba(0,0,0,.3));`;
const PageScroll = styled.div`
  width: 9px; margin-left: auto; display: flex; flex-direction: column; align-items: center; justify-content: space-between; padding: 4px 0 3px;
  background: linear-gradient(#c1c1c1, #c1c1c1) 1px 10px / 8px 321px no-repeat #f4f4f4;
`;
const SnipGhost = styled.div`
  position: absolute; left: 77px; top: 43px; width: 172px; height: 21px; text-align: center; line-height: 21px; font-size: 10.800px;
  padding-right: 24px; background: rgba(120, 140, 170, .035); color: rgba(120, 130, 140, .14);
`;

const Close = () => <svg width="6" height="6" viewBox="0 0 6 6"><path d="M.5.5l5 5M5.500.5l-5 5" stroke="#333" strokeWidth="1.100" /></svg>;
const ClassFav = ({ c, k }) => <svg width="10" height="9" viewBox="0 0 10 9"><rect width="10" height="9" rx="1" fill={c} /><rect x="1.500" y="1.500" width="7" height="6" fill={k} /><circle cx="5" cy="3.500" r="1.100" fill="#fff" /><path d="M2.800 6.500c1-1.500 3.400-1.500 4.400 0z" fill="#fff" /></svg>;
const SFav = () => <svg width="11" height="10" viewBox="0 0 11 10"><path d="M9.500 2.300C7.500.8 2 .6 2 2.800 2 5.200 9.300 4.400 9.300 7 9.300 9.600 3 9.300 1 7.700" fill="none" stroke="#2f9e0e" strokeWidth="2" /></svg>;
const GFav = () => <svg width="10" height="10" viewBox="0 0 10 10" fill="none" strokeWidth="1.600"><path d="M8 2.200A4 4 0 0 0 1.500 3" stroke="#ea4335" /><path d="M1.500 3a4 4 0 0 0 0 4" stroke="#fbbc05" /><path d="M1.500 7A4 4 0 0 0 7.800 8" stroke="#34a853" /><path d="M5 5h4A4 4 0 0 1 7.800 8" stroke="#4285f4" /></svg>;

const BrowserShot = () => (
  <Browser>
    <TabBar>
      <TabSearch><Chevron size={7} sw={1.800} color="#222" /></TabSearch>
      <Tab $sep><Fav><ClassFav c="#f0b429" k="#188038" /></Fav><TabTitle>Home</TabTitle><span><Close /></span></Tab>
      <Tab><Fav><ClassFav c="#12a4b4" k="#0b7285" /></Fav><TabTitle $fade $ls={-.18}>JavaScript Chapters 1-10 exercis</TabTitle><span><Close /></span></Tab>
      <Tab $on><Fav><SFav /></Fav><TabTitle $fade $ls={-.15}>A Smarter Way to Learn JavaScri</TabTitle><span><Close /></span></Tab>
      <Tab $sep><Fav><GFav /></Fav><TabTitle $ls={-.13}>concatenation - Google Search</TabTitle><span><Close /></span></Tab>
      <svg width="19" height="8" viewBox="0 0 19 8"><path d="M6 4h7M9.500.500v7" stroke="#333" strokeWidth="1.100" /></svg>
      <BrowserWin><WindowGlyph kind="min" size={7} color="#222" sw={1.400} /><WindowGlyph kind="restore" size={7} color="#222" sw={1.600} /><WindowGlyph kind="close" size={7} color="#222" sw={1.400} /></BrowserWin>
    </TabBar>
    <NavBar>
      <NavItem $w={23}><BackArrow size={9} color="#333" /></NavItem><NavItem $w={22}><BackArrow flip size={9} color="#aaa" /></NavItem>
      <NavItem $w={21}><svg width="9" height="9" viewBox="0 0 9 9"><path d="M8 4.500A3.500 3.500 0 1 1 6.500 1.700" fill="none" stroke="#333" strokeWidth="1.200" /><path d="M8.300.5v3.200H5.200z" fill="#333" /></svg></NavItem>
      <Omni>
        <SiteInfo><svg width="9" height="8" viewBox="0 0 9 8" fill="none" stroke="#333" strokeWidth="1.100"><circle cx="1.800" cy="2" r="1.200" /><path d="M4 2h4.500M.5 6H5" /><circle cx="7" cy="6" r="1.200" /></svg></SiteInfo>
        <span>asmarterwaytolearn.com/js/10.html</span><Spacer />
        <svg width="11" height="11" viewBox="0 0 11 11"><path d="M5.500.3l1.600 3.500 3.700.4L8 6.700l.8 3.800-3.300-2-3.300 2L3 6.700.2 4.200l3.700-.4z" fill="#0b57d0" /></svg>
      </Omni>
      <NavItem $w={22}><svg width="11" height="11" viewBox="0 0 11 11"><path d="M1 2.500h2.800a1.300 1.300 0 0 1 2.600 0H9v2.800a1.300 1.300 0 0 1 0 2.400V10H1V7.500c1.500 0 1.500-2.300 0-2.300z" fill="none" stroke="#333" strokeWidth="1.200" /></svg></NavItem>
      <MarkSep $m={0} />
      <NavItem $w={22}><svg width="21" height="10" viewBox="0 0 21 10"><rect x="12" y="1" width="9" height="8.500" fill="#444" /><path d="M13 2h4v6.500h-4z" fill="#fff" /></svg></NavItem>
      <svg width="33" height="14" viewBox="0 0 33 14"><circle cx="16" cy="7" r="6.200" fill="#8ea9bd" /><path d="M12 3l4 2 1-3 3 3-1 4 2 1-3 3-2-4-3 2-2-3z" fill="#25242e" /><path d="M13 5l2 4-2 2zM17 4l1 4z" fill="#dfe8ee" stroke="#dfe8ee" /></svg>
      <svg width="16" height="10" viewBox="0 0 16 10" fill="#333"><circle cx="6" cy="1.300" r="1" /><circle cx="6" cy="5" r="1" /><circle cx="6" cy="8.700" r="1" /></svg>
    </NavBar>
    <Bookmarks>
      <Mark $w={45}><svg width="9" height="7" viewBox="0 0 9 7" fill="none" strokeWidth="1.800"><path d="M1 7V1" stroke="#4285f4" /><path d="M8 7V1" stroke="#34a853" /><path d="M.7.8L4.500 4 8.300.8" stroke="#ea4335" /></svg>Gmail</Mark>
      <Mark $w={56}><svg width="10" height="7" viewBox="0 0 10 7"><rect width="10" height="7" rx="1.800" fill="#f00" /><path d="M4 2l2.800 1.500L4 5z" fill="#fff" /></svg>YouTube</Mark>
      <Mark $w={45}><svg width="9" height="9" viewBox="0 0 9 9"><path d="M0 0h8v9H0z" fill="#34a853" /><path d="M0 9l8-8v8z" fill="#c8d4e4" /><path d="M0 8l7-7" stroke="#fbbc05" /><path d="M7 0a2 2 0 0 1 2 2c0 1.500-2 3.500-2 3.500S5 3.500 5 2a2 2 0 0 1 2-2z" fill="#ea4335" /></svg>Maps</Mark>
      <Mark $w={55}><svg width="9" height="9" viewBox="0 0 9 9"><path d="M3 2.500h6V9H5z" fill="#b7c3d6" /><path d="M0 0h5l2 7H0z" fill="#4285f4" /><circle cx="3" cy="3.500" r="1.200" fill="none" stroke="#fff" strokeWidth=".8" /></svg>Translate</Mark>
      <Mark $w={50}><svg width="10" height="9" viewBox="0 0 10 9"><path d="M1.500 0h7v3h-7z" fill="#34a853" /><path d="M0 1.500h3V4H0z" fill="#ea4335" /><path d="M7 1.500h3V4H7z" fill="#fbbc05" /><rect y="3" width="10" height="6" rx="1" fill="#4285f4" /><path d="M2 5h2.500v2H2zM5.500 5h3M5.500 7h3" stroke="#fff" fill="none" strokeWidth=".7" /></svg>News</Mark>
      <Spacer /><MarkSep $m={9} />
      <Mark $w={63}><svg width="11" height="9" viewBox="0 0 11 9"><path d="M.7.800h3.500l1 1.200h5v6.300H.7z" fill="none" stroke="#444" strokeWidth="1.100" /></svg>All Bookmarks</Mark>
    </Bookmarks>
    <PageArea>
      <Article>
        <Masthead>
          <MastTitle>A Smarter Way to Learn <b>JavaScript</b>  /  Chapter 10</MastTitle>
          <Numbers>{Array.from({ length: 20 }, (_, i) => <Num key={i} $here={i === 6}>{i + 1}</Num>)}</Numbers>
        </Masthead>
        <Para><Row $ls={.14}>Fail-safe coding. If you type the wrong character, I'll cancel the keystroke.</Row><Row $ls={.27}>Type spaces and carriage returns.</Row></Para>
        <Para>This is the first line of an <em>if</em> statement.</Para>
        <Para as="div"><Code>{'if (firstName === "John") {'}</Code></Para>
        <Para><Row $ls={.27}>Complete the <em>if</em> statement. If the condition is true, display an alert that</Row><Row $ls={.22}>says, "Hi, John".</Row></Para>
        <Answer>
          <AnswerCode $s={12.200}>{'alert("Hi, John");'}</AnswerCode><Spacer /><StatusDot />
        </Answer>
        <TryButton>See the answer and try again later</TryButton>
        <Correct>
          <CorrectLabel>The correct code:</CorrectLabel>
          <Code>{'  alert("Hi, John");'}</Code>
          <Code>{"}"}</Code>
          <NextButton />
        </Correct>
      </Article>
      <SideBoxes><SideBox /><SideBox /><Dotted /></SideBoxes>
      <PageScroll>
        <svg width="5" height="3" viewBox="0 0 5 3"><path d="M0 3L2.500 0 5 3z" fill="#888" /></svg>
        <svg width="5" height="3" viewBox="0 0 5 3"><path d="M0 0l2.500 3L5 0z" fill="#444" /></svg>
      </PageScroll>
      <SnipGhost>Full-screen Snip</SnipGhost>
    </PageArea>
  </Browser>
);

const PhotosWindow = () => (
  <Photos>
    <PhotosBar>
      <PhotosHome>
        <svg width="16" height="16" viewBox="0 0 16 16" fill="none" stroke="#fff" strokeWidth="1.200"><rect x="1" y="1" width="12" height="12" rx="2" /><path d="M2 12l5-5 5 5" /><circle cx="9.500" cy="4" r="1" /><path d="M14.800 4v8a3 3 0 0 1-3 3H4" /></svg>
      </PhotosHome>
      <PhotosName>10th.PNG</PhotosName>
      <Tool><Stroke><path d="M17 9V3.200H3v13.500h7.500M3 15l6-5.500 4 3.500" /><circle cx="13" cy="6.500" r="1.200" /><path d="M10.500 17.500l.8-3 5-5 2.200 2.200-5 5z" fill="#fff" strokeWidth=".5" /></Stroke></Tool>
      <Tool><Stroke><path d="M2.500 10.500A7.500 7.500 0 1 1 14 16M13 12.500v4.500h4.500" /><circle cx="10" cy="10" r="1.500" strokeWidth="1.500" /></Stroke></Tool>
      <Tool><Stroke><path d="M2.500 5h15M7.500 5a2.500 2.500 0 0 1 5 0M4.200 5l1.300 12.500h9L15.800 5M8.400 8.500v6M11.600 8.500v6" /></Stroke></Tool>
      <Tool><Stroke o={.45}><path d="M10 17L3.200 10.200a4 4 0 0 1 0-5.800 4 4 0 0 1 5.700 0L10 5.500l1.100-1.100a4 4 0 0 1 5.700 0 4 4 0 0 1 0 5.800z" /></Stroke></Tool>
      <Tool><Stroke><circle cx="10" cy="10" r="7.200" /><path d="M10 9v5M10 6.200v1.300" /></Stroke></Tool>
      <Tool><Stroke><path d="M5 6V3.500h10V6M5 14.500H2.800V8a2 2 0 0 1 2-2h10.400a2 2 0 0 1 2 2v6.500H15" /><rect x="5.500" y="10.500" width="9" height="6" rx="1" /></Stroke></Tool>
      <Tool><Cloud w={20} h={14} /></Tool>
      <Tool><svg width="17" height="18" viewBox="0 0 17 18"><defs><linearGradient id="clip" x1="0" y1="0" x2="1" y2="1"><stop offset="0" stopColor="#f29af5" /><stop offset=".5" stopColor="#a35cf0" /><stop offset="1" stopColor="#4a36e8" /></linearGradient></defs><path d="M0 4.500L15 1l.8 2.500L3 6H0z" fill="#7a43b8" /><rect y="6.300" width="16.500" height="11.200" rx="1" fill="url(#clip)" /></svg></Tool>
      <Tool><svg width="20" height="4" viewBox="0 0 20 4" fill="#fff"><circle cx="2.500" cy="2" r="1.300" /><circle cx="10" cy="2" r="1.300" /><circle cx="17.500" cy="2" r="1.300" /></svg></Tool>
      <Spacer />
      <WinCell><WindowGlyph kind="min" color="#fff" /></WinCell><WinCell><WindowGlyph kind="max" color="#fff" sw={1.100} /></WinCell><WinCell><WindowGlyph kind="close" color="#fff" /></WinCell>
    </PhotosBar>
    <BrowserShot />
    <Bar $fs={10}>
      <TaskbarContent s={0.625} time="2:04 AM" apps={[["mail"], ["gmail"], ["edge"], ["files"], ["word"], ["store"], ["chrome"], ["en"], ["chrome", "on"], ["note", "line"]]} />
    </Bar>
    <PhotosFoot />
  </Photos>
);

export default function App() {
  return (
    <Desktop>
      <Global />
      <ExplorerWindow />
      <PropertiesDialog />
      <PhotosWindow />
      <BottomBar $fs={16}>
        <TaskbarContent s={1} time="2:26 AM" apps={[["mail"], ["gmail"], ["edge"], ["files", "line"], ["word"], ["store"], ["chrome"], ["en"], ["chrome", "line"], ["photos", "on"]]} />
      </BottomBar>
    </Desktop>
  );
}
